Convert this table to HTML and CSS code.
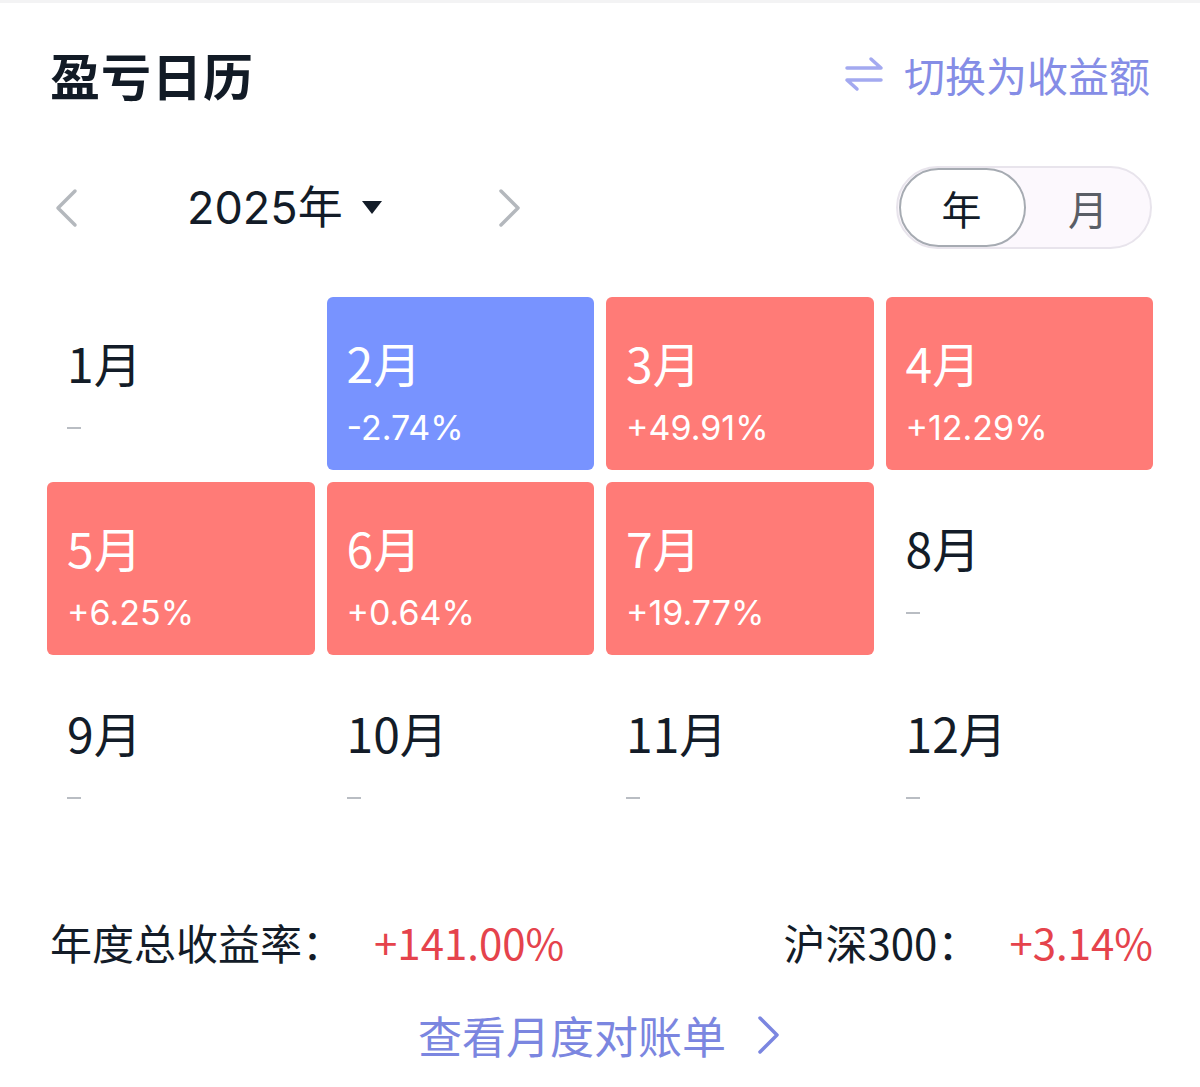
FILE: index.html
```html
<!DOCTYPE html>
<html lang="zh-CN">
<head>
<meta charset="utf-8">
<title>盈亏日历</title>
<link rel="stylesheet" href="styles.css">
</head>
<body>
<div class="topbar"></div>
<main class="page">
  <header class="header">
    <h1 class="title">盈亏日历</h1>
    <div class="switch">
      <svg class="switch-icon" width="40" height="36" viewBox="0 0 40 36" fill="none" stroke="#a3a9f0" stroke-width="3.5" stroke-linecap="round" stroke-linejoin="round">
        <path d="M3 12 H37 L27 3"/>
        <path d="M37 24 H3 L13 33"/>
      </svg>
      <span>切换为收益额</span>
    </div>
  </header>

  <section class="yearbar">
    <div class="yearnav">
      <svg class="chev" width="24" height="40" viewBox="0 0 24 40" fill="none" stroke="#b4b8bd" stroke-width="3.5" stroke-linecap="round" stroke-linejoin="round"><path d="M21 3 L4 20 L21 37"/></svg>
      <div class="year">2025年<span class="caret"></span></div>
      <svg class="chev" width="24" height="40" viewBox="0 0 24 40" fill="none" stroke="#b4b8bd" stroke-width="3.5" stroke-linecap="round" stroke-linejoin="round"><path d="M3 3 L20 20 L3 37"/></svg>
    </div>
    <div class="toggle">
      <span class="opt active">年</span>
      <span class="opt">月</span>
    </div>
  </section>

  <section class="grid">
    <div class="cell"><div class="m">1月</div><div class="v"><span class="dash"></span></div></div>
    <div class="cell down"><div class="m">2月</div><div class="v">-2.74%</div></div>
    <div class="cell up"><div class="m">3月</div><div class="v">+49.91%</div></div>
    <div class="cell up"><div class="m">4月</div><div class="v">+12.29%</div></div>
    <div class="cell up"><div class="m">5月</div><div class="v">+6.25%</div></div>
    <div class="cell up"><div class="m">6月</div><div class="v">+0.64%</div></div>
    <div class="cell up"><div class="m">7月</div><div class="v">+19.77%</div></div>
    <div class="cell"><div class="m">8月</div><div class="v"><span class="dash"></span></div></div>
    <div class="cell"><div class="m">9月</div><div class="v"><span class="dash"></span></div></div>
    <div class="cell"><div class="m">10月</div><div class="v"><span class="dash"></span></div></div>
    <div class="cell"><div class="m">11月</div><div class="v"><span class="dash"></span></div></div>
    <div class="cell"><div class="m">12月</div><div class="v"><span class="dash"></span></div></div>
  </section>

  <section class="summary">
    <div class="stat"><span class="label">年度总收益率：</span><span class="num">+141.00%</span></div>
    <div class="stat"><span class="label">沪深300：</span><span class="num">+3.14%</span></div>
  </section>

  <a class="more" href="#">查看月度对账单
    <svg class="more-chev" width="24" height="40" viewBox="0 0 24 40" fill="none" stroke="#7b86e0" stroke-width="3.5" stroke-linecap="round" stroke-linejoin="round"><path d="M4 3 L21 20 L4 37"/></svg>
  </a>
</main>
</body>
</html>
```

FILE: styles.css
```css
* { box-sizing: border-box; }
html, body { margin: 0; padding: 0; background: #ffffff; }
body {
  width: 1200px;
  font-family: "Noto Sans CJK SC", "Noto Sans", sans-serif;
  color: #131c28;
}
.topbar { height: 3px; background: #f3f3f4; }
.page { padding: 0 47px 0 47px; }

.header {
  height: 142px;
  display: flex;
  align-items: center;
  justify-content: space-between;
}
.title {
  margin: 0 0 0 3px;
  font-size: 50px;
  font-weight: 700;
  letter-spacing: 1px;
  line-height: 56px;
  color: #121b26;
}
.switch {
  display: flex;
  align-items: center;
  gap: 20px;
  margin-right: 3px;
  font-size: 41px;
  line-height: 48px;
  color: #858de6;
}

.yearbar {
  margin-top: 21px;
  height: 83px;
  display: flex;
  align-items: center;
  justify-content: space-between;
}
.yearnav { display: flex; align-items: center; margin-left: 7px; }
.chev { display: block; }
.year {
  display: flex;
  align-items: center;
  font-family: "Inter", "Noto Sans CJK SC", sans-serif;
  font-size: 45px;
  line-height: 52px;
  margin: 0 116px 0 109px;
  color: #131c28;
}
.caret {
  width: 0; height: 0;
  margin-left: 19px;
  border-left: 10px solid transparent;
  border-right: 10px solid transparent;
  border-top: 13px solid #131c28;
}
.toggle {
  width: 256px;
  height: 83px;
  margin-right: 1px;
  border: 2px solid #e8e4ec;
  border-radius: 42px;
  background: #fcf8fd;
  display: flex;
  align-items: stretch;
}
.opt {
  flex: 1;
  display: flex;
  align-items: center;
  justify-content: center;
  font-size: 40px;
  color: #5a5e66;
}
.opt.active {
  flex: 0 0 127px;
  margin-left: 1px;
  background: #ffffff;
  border: 2px solid #a6abb2;
  border-radius: 40px;
  color: #131c28;
  padding-right: 2px;
}

.grid {
  margin-top: 48px;
  width: 1106px;
  display: grid;
  grid-template-columns: repeat(4, 1fr);
  grid-auto-rows: 173px;
  column-gap: 12px;
  row-gap: 12px;
}
.cell {
  border-radius: 6px;
  padding: 35px 20px 0 20px;
  color: #131c28;
}
.cell.up { background: #ff7b77; color: #ffffff; }
.cell.down { background: #7893ff; color: #ffffff; }
.m { font-size: 48px; line-height: 60px; }
.v {
  font-family: "Inter", "Noto Sans CJK SC", sans-serif;
  font-size: 34px;
  line-height: 44px;
  height: 44px;
  margin-top: 14px;
  display: flex;
  align-items: center;
}
.dash { display: block; width: 14px; height: 2px; background: #b9bdc3; }

.summary {
  margin-top: 76px;
  height: 52px;
  display: flex;
  align-items: center;
  justify-content: space-between;
  font-size: 42px;
  line-height: 52px;
}
.stat { display: flex; align-items: center; }
.label { color: #131c28; margin-left: 3px; }
.num { color: #e5434c; margin-left: 30px; }

.more {
  margin-top: 41px;
  display: flex;
  align-items: center;
  justify-content: center;
  gap: 30px;
  font-size: 44px;
  line-height: 52px;
  color: #7b86e0;
  text-decoration: none;
  padding-right: 2px;
}
.more-chev { display: block; }
```
